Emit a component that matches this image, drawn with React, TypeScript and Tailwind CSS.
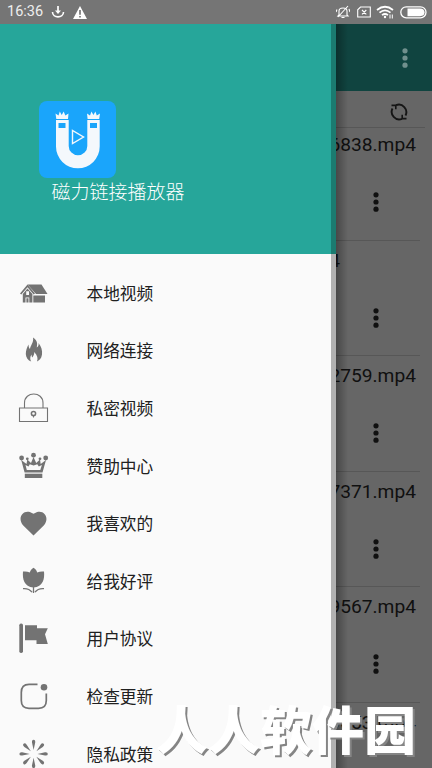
import { ReactNode } from "react";

interface IMenuItem {
    titulo: string
    icone: ReactNode
}

const menu: IMenuItem[] = [
    {
        titulo: "本地视频",
        icone: (
            <>
                <path d="M7.5 5.5H21.5L27.5 15H16Z" />
                <path d="M0 14.5L7.5 5.5L15 14.5L13.7 15.6L7.5 8.3L1.3 15.6Z" />
                <path fillRule="evenodd" d="M2.8 15L7.5 9.5L12.4 15V23.5H9.3V18.5H5.5V23.5H2.8ZM6.2 12.3V16H9V12.3Z" />
                <path d="M6.4 19.3H8.5V23.5H6.4ZM13.3 16.5H25V23.5H13.3Z" />
            </>
        ),
    },
    {
        titulo: "网络连接",
        icone: <path d="M13 1.5C18 4.5 17.3 8.5 16.8 11.5C18.8 10 18.8 8.5 18.5 7C21.3 10.5 22.5 14.5 22 18.5C21.5 22.5 19 24.5 17 25.5C18.2 22.5 17.5 19.5 14.2 16C14.5 19 13 20 12.4 21.5C11.5 20.5 11.7 19.5 11.6 18.5C9.8 21 10 23.5 11.2 25.5C8 24.5 6 21.5 5.8 18C5.8 14.5 7 11.5 8.5 8.5C8.6 11 9 12 10 13C10.3 9.5 14 6.5 13 1.5Z" />,
    },
    {
        titulo: "私密视频",
        icone: (
            <g fill="none" stroke="currentColor" strokeWidth="1.1">
                <path d="M-.5 14H27.5V27.5H-.5ZM4.5 14V9C4.5-3 23-3 23 9V14" />
                <circle cx="13.5" cy="19.5" r="2.1" strokeWidth="1.5" />
                <path d="M13.5 21.5V23.5" />
            </g>
        ),
    },
    {
        titulo: "赞助中心",
        icone: (
            <>
                <circle cx="1.6" cy="6" r="2.4" />
                <circle cx="13.5" cy="3.2" r="2.4" />
                <circle cx="25.7" cy="6" r="2.4" />
                <circle cx="7.3" cy="6.8" r="1.4" />
                <circle cx="20" cy="6.8" r="1.4" />
                <path fillRule="evenodd" d="M1.2 8L6.5 12L7.3 7.5L11 11L13.5 5L16.2 11L20 7.5L20.7 12L26 8L22.5 20.5H4.6ZM5.5 13L6.8 18H20.3L21.9 13L18.8 14.5L17.3 12.3L13.6 13.5L9.8 12.3L8.5 14.5Z" />
                <path d="M4.8 21.7H22.3V26H4.8Z" />
            </>
        ),
    },
    {
        titulo: "我喜欢的",
        icone: <path d="M13.5 26.5L3 16.2C-3.5 8.5 4-1.8 13.5 4.8C23-1.8 30.5 8.5 24 16.2Z" />,
    },
    {
        titulo: "给我好评",
        icone: (
            <>
                <path d="M13.5 .8C15.5 1.9 16.6 3.6 17.2 5.4C19.3 4.6 21.5 4.3 24 4.6C24.8 12 23 20 13.5 20.5C4 20 2.3 12 3 4.6C5.6 4.3 7.8 4.6 9.8 5.4C10.5 3.6 11.5 1.9 13.5 .8Z" />
                <path d="M13.5 20V26M12 25.2C9.5 21.7 6.5 21.3 3 21.6M15 25.2C17.5 21.7 20.5 21.3 24 21.6" fill="none" stroke="currentColor" strokeWidth="1.3" />
            </>
        ),
    },
    {
        titulo: "用户协议",
        icone: (
            <>
                <path d="M5 1.3H17V4.3H27.8L25 10.3L27.8 20H16.5V16.3H5Z" />
                <rect x="-.7" y="-.5" width="3.7" height="29.5" rx="1.7" />
            </>
        ),
    },
    {
        titulo: "检查更新",
        icone: (
            <>
                <path d="M17.5 2.4H9Q1.3 2.4 1.3 10.5V18.5Q1.3 26.3 9 26.3H18.5Q26.3 26.3 26.3 18.5V11.5" fill="none" stroke="currentColor" strokeWidth="1.7" />
                <circle cx="24" cy="5.2" r="3.3" />
            </>
        ),
    },
    {
        titulo: "隐私政策",
        icone: [0, 45, 90, 135, 180, 225, 270, 315].map((angulo) => (
            <path key={angulo} d="M13.6 10L12 2.5Q11.7 -.3 13.6 -.3Q15.5 -.3 15.2 2.5Z" transform={`rotate(${angulo} 13.6 13.9)`} />
        )),
    },
];

const videos = ["6838.mp4", "4", "2759.mp4", "7371.mp4", "9567.mp4", "9053.mp4"];

function MoreDots({ className }: { className: string }) {
    return (
        <svg viewBox="0 0 6 20" className={className} fill="currentColor">
            <circle cx="3" cy="2.8" r="2.6" />
            <circle cx="3" cy="10" r="2.6" />
            <circle cx="3" cy="17.2" r="2.6" />
        </svg>
    )
}

function StatusBar() {
    return (
        <header className="h-6 shrink-0 bg-[#757575] text-white flex items-center justify-between pl-[7px] pr-[5px]">
            <div className="flex items-center">
                <span className="font-['Roboto',sans-serif] text-[14.5px] w-[37px] leading-6 text-[#eeeeee]">16:36</span>
                <svg viewBox="0 0 14 14" className="w-3.5 h-3.5 ml-[7px]" fill="none" stroke="currentColor">
                    <path d="M7 1V7" strokeWidth="1.7" />
                    <path d="M4 5.5H10L7 9Z" fill="currentColor" stroke="none" />
                    <path d="M1.5 7C1.5 13.5 12.5 13.5 12.5 7" strokeWidth="1.6" />
                </svg>
                <svg viewBox="0 0 14 13" className="w-3.5 h-[13px] ml-2">
                    <path d="M7 0L14 13H0Z" fill="currentColor" />
                    <path d="M7 4V8.7M7 10V11.5" stroke="#666" strokeWidth="1.5" />
                </svg>
            </div>
            <div className="flex items-center">
                <svg viewBox="0 0 14 14" className="w-3.5 h-3.5" fill="none" stroke="currentColor" strokeWidth="1.1">
                    <path d="M3 10V6C3 2 11 2 11 6V10L12 11H2ZM5.5 12.5H8.5M12 1L2 12M1 4.5L0 7M13 4L14 7" />
                </svg>
                <svg viewBox="0 0 14 12" className="w-3.5 h-3 ml-[7px]" fill="none" stroke="currentColor" strokeWidth="1.1">
                    <path d="M3.5 1H13.3V11H.7V3.8ZM5 4L9.3 8.3M9.3 4L5 8.3" />
                </svg>
                <svg viewBox="0 0 18 14" className="w-[18px] h-3.5 ml-[5px]" fill="none" stroke="currentColor" strokeWidth="1.7">
                    <path d="M1 5Q9-1.5 17 5M3.5 7.7Q9 3 14.5 7.7M6 10.2Q9 7.8 12 10.2" />
                    <circle cx="9" cy="12" r="1.2" fill="currentColor" stroke="none" />
                    <path d="M14 9.5V13.5M16.3 9.5V13.5" strokeWidth="1" />
                </svg>
                <svg viewBox="0 0 27 13" className="w-[27px] h-[13px] ml-1.5">
                    <rect x=".8" y=".8" width="25.2" height="11" rx="5.5" fill="none" stroke="currentColor" strokeWidth="1.3" />
                    <path d="M7.5 2.5H20Q24.5 2.5 24.5 6.3T20 10.2H7.5Z" fill="currentColor" />
                </svg>
            </div>
        </header>
    )
}

function Logo() {
    return (
        <svg viewBox="0 0 77 77" className="w-[77px] h-[77px]">
            <rect width="77" height="77" rx="8" fill="#1aa5fb" />
            <g fill="#f4f8fc">
                <path d="M17.3 18L16.5 12.5L19.5 14.5L20.8 10.5L22.7 14L24.7 10.5L26.3 14.5L29.5 12.5L29 18ZM48.6 18L48 12.5L51 14.5L52.5 10.5L54.4 14L56.4 10.5L57.8 14.5L61 12.5L60.2 18Z" />
                <path d="M17 19H29.7V45A9.3 9.3 0 0 0 48.3 45V19H60.7V45.5A21.8 21.8 0 0 1 17 45.5Z" />
            </g>
            <path d="M19.5 22H26.5V27H19.5ZM51 22H58V27H51Z" fill="#1aa5fb" />
            <path d="M33.5 29.5V42.5L44.5 36Z" fill="none" stroke="#f4f8fc" strokeWidth="1.4" />
        </svg>
    )
}

function Drawer() {
    return (
        <aside className="w-[336px] shrink-0 flex flex-col">
            <div className="h-[230px] shrink-0 border-r-[5px] border-[#1b7b70] bg-[#26a69a] pt-[77px] pl-[38.5px]">
                <Logo />
                <h1 className="ml-[13px] text-[19px] leading-[26px] font-light text-white">磁力链接播放器</h1>
            </div>
            <ul className="flex-1 min-h-0 overflow-hidden pt-2.5 bg-[#fafafa] border-r-[5px] border-[#b1b1b1]">
                {menu.map((item) => (
                    <li key={item.titulo} className="h-[57.6px] pl-5 flex items-center">
                        <svg viewBox="0 0 27 28" className="w-[27px] h-7 overflow-visible text-[#737373]" fill="currentColor">
                            {item.icone}
                        </svg>
                        <span className="ml-[39.5px] text-[16.7px] leading-6 text-[#202020]">{item.titulo}</span>
                    </li>
                ))}
            </ul>
        </aside>
    )
}

function VideoList() {
    return (
        <main className="flex-1 min-w-0 bg-[#666666] overflow-hidden relative">
            <div className="h-[67px] bg-[#104440] flex items-center justify-end pr-6 text-[#70908d]">
                <MoreDots className="w-1.5 h-5" />
            </div>
            <div className="h-[37px] mr-[7px] border-b border-[#575757] flex items-center justify-end pr-[17px] pt-1.5">
                <svg viewBox="0 0 18 18" className="w-[18px] h-[18px]" fill="none" stroke="#151515" strokeWidth="1.9">
                    <path d="M6 2.2A7.5 7.5 0 0 1 15.5 12.5M12 15.8A7.5 7.5 0 0 1 2.5 5.5" />
                    <path d="M5.8 6.2V2.4H1.5M12.2 11.8V15.6H16.5" strokeWidth="1.6" />
                </svg>
            </div>
            <div className="-mt-[3px]">
                {videos.map((nome) => (
                    <div key={nome} className="h-[115.6px] mr-3 border-b border-[#575757]">
                        <p className={`font-['Roboto',sans-serif] text-[19.2px] leading-6 pt-2 text-[#101010] flex justify-end ${nome === "4" ? "pr-20" : "pr-1"}`}>{nome}</p>
                        <MoreDots className="w-1.5 h-5 ml-auto mr-[41.5px] mt-[35px] text-[#101010]" />
                    </div>
                ))}
            </div>
            <div className="absolute inset-y-0 left-0 w-3 bg-linear-to-r from-black/30 to-transparent" />
        </main>
    )
}

function App() {
    return (
        <div className="relative w-[432px] h-[768px] overflow-hidden flex flex-col font-['Noto_Sans_CJK_SC',sans-serif]">
            <StatusBar />
            <div className="flex flex-1 min-h-0">
                <Drawer />
                <VideoList />
            </div>
            <div className="absolute left-[156px] top-[689px] text-[52px] leading-[78px] font-black whitespace-nowrap text-white [text-shadow:2px_2px_0_#858585]">人人软件园</div>
        </div>
    )
}
export default App;
